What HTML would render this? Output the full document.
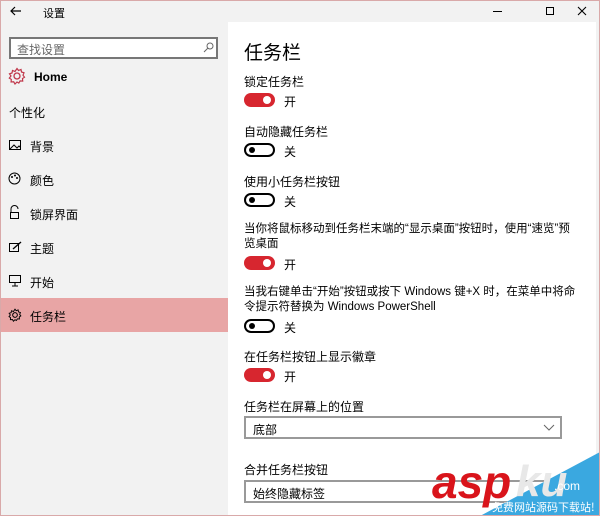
<!DOCTYPE html>
<html><head><meta charset="utf-8"><style>
*{margin:0;padding:0;box-sizing:border-box}
body{width:600px;height:516px;overflow:hidden;background:#f2f2f2;font-family:"Liberation Sans","Noto Sans CJK SC",sans-serif;font-size:12px;color:#000;position:relative}
.frame{position:absolute;inset:0;border:1px solid #d9a9a9;pointer-events:none;z-index:9}
.t{position:absolute;white-space:nowrap}
.main{position:absolute;left:228px;top:22px;width:368px;height:494px;background:#fff}
.tog{position:absolute;width:31px;height:14px;border-radius:7px}
.on{background:#d7262f}
.on::after{content:"";position:absolute;right:4px;top:3px;width:8px;height:8px;border-radius:50%;background:#fff}
.off{border:2px solid #000;background:#fff}
.off::after{content:"";position:absolute;left:3px;top:2px;width:6px;height:6px;border-radius:50%;background:#000}
.sel{position:absolute;left:244px;width:318px;height:23px;border:2px solid #999;background:#fff}
svg.i{position:absolute}
</style></head><body>
<div class="frame"></div>
<svg class="i" style="left:10px;top:5px" width="12" height="12"><path d="M11 6H1M5 2L1 6l4 4" stroke="#000" fill="none" stroke-width="1.2"/></svg>
<div class="t" style="left:43px;top:5px;font-size:11px">设置</div>
<div style="position:absolute;left:493px;top:11px;width:9px;height:1px;background:#000"></div>
<div style="position:absolute;left:546px;top:7px;width:8px;height:8px;border:1px solid #000"></div>
<svg class="i" style="left:577px;top:6px" width="10" height="10"><path d="M1 1l8 8M9 1L1 9" stroke="#000" stroke-width="1.1"/></svg>

<div style="position:absolute;left:9px;top:37px;width:209px;height:22px;border:2px solid #777;background:#fff"></div>
<div class="t" style="left:17px;top:41px;color:#666">查找设置</div>
<svg class="i" style="left:203px;top:42px" width="11" height="11"><circle cx="7" cy="4" r="3" stroke="#666" fill="none"/><path d="M5 6L1 10" stroke="#666"/></svg>
<svg class="i" style="left:8px;top:67px" width="18" height="18" viewBox="0 0 18 18"><circle cx="9" cy="9" r="3" stroke="#c0374a" fill="none" stroke-width="1.3"/><path d="M9 1.5l1.5 2 2.5-1 .5 2.5 2.5.8-1 2.4 1.5 2-2 1.3.2 2.6-2.6-.2-1.3 2.2L9 15l-2 2-1.3-2.2-2.6.2.2-2.6-2-1.3L3 9 1.5 6.8l2.5-.8.5-2.5 2.5 1z" stroke="#c0374a" fill="none" stroke-width="1.2"/></svg>
<div class="t" style="left:34px;top:70px;font-weight:bold;font-size:12px">Home</div>
<div class="t" style="left:9px;top:104px">个性化</div>
<svg class="i" style="left:9px;top:140px" width="12" height="11"><rect x=".5" y=".5" width="11" height="9" stroke="#000" fill="none"/><path d="M1 9l4-4 3 3 2-2 2 2" stroke="#000" fill="none"/></svg>
<div class="t" style="left:30px;top:138px">背景</div>
<svg class="i" style="left:8px;top:172px" width="13" height="13"><circle cx="6.5" cy="6.5" r="5.5" stroke="#000" fill="none"/><circle cx="4" cy="5" r="1" fill="#000"/><circle cx="7" cy="3.5" r="1" fill="#000"/><circle cx="9" cy="6" r="1" fill="#000"/></svg>
<div class="t" style="left:30px;top:172px">颜色</div>
<svg class="i" style="left:9px;top:205px" width="11" height="14"><path d="M2 7V4a3.5 3.5 0 0 1 7 0" stroke="#000" fill="none"/><rect x="1.5" y="7.5" width="8" height="6" stroke="#000" fill="none"/></svg>
<div class="t" style="left:30px;top:206px">锁屏界面</div>
<svg class="i" style="left:9px;top:241px" width="13" height="12"><rect x=".5" y="2.5" width="9" height="8" stroke="#000" fill="none"/><path d="M4 8l8-7" stroke="#000" stroke-width="1.3"/></svg>
<div class="t" style="left:30px;top:240px">主题</div>
<svg class="i" style="left:9px;top:275px" width="12" height="12"><rect x=".5" y=".5" width="11" height="7" stroke="#000" fill="none"/><path d="M6 8v3M3 11h6" stroke="#000"/></svg>
<div class="t" style="left:30px;top:274px">开始</div>
<div style="position:absolute;left:1px;top:298px;width:227px;height:34px;background:#e8a5a5"></div>
<svg class="i" style="left:8px;top:308px" width="14" height="14" viewBox="0 0 18 18"><circle cx="9" cy="9" r="3" stroke="#000" fill="none" stroke-width="1.3"/><path d="M9 1.5l1.5 2 2.5-1 .5 2.5 2.5.8-1 2.4 1.5 2-2 1.3.2 2.6-2.6-.2-1.3 2.2L9 15l-2 2-1.3-2.2-2.6.2.2-2.6-2-1.3L3 9 1.5 6.8l2.5-.8.5-2.5 2.5 1z" stroke="#000" fill="none" stroke-width="1.2"/></svg>
<div class="t" style="left:30px;top:308px">任务栏</div>

<div class="main"></div>
<div class="t" style="left:244px;top:38px;font-size:19px">任务栏</div>
<div class="t" style="left:244px;top:73px">锁定任务栏</div>
<div class="tog on" style="left:244px;top:93px"></div><div class="t" style="left:284px;top:93px">开</div>
<div class="t" style="left:244px;top:123px">自动隐藏任务栏</div>
<div class="tog off" style="left:244px;top:143px"></div><div class="t" style="left:284px;top:143px">关</div>
<div class="t" style="left:244px;top:173px">使用小任务栏按钮</div>
<div class="tog off" style="left:244px;top:193px"></div><div class="t" style="left:284px;top:193px">关</div>
<div class="t" style="left:244px;top:222px;line-height:15px;font-size:11.5px">当你将鼠标移动到任务栏末端的“显示桌面”按钮时，使用“速览”预<br>览桌面</div>
<div class="tog on" style="left:244px;top:256px"></div><div class="t" style="left:284px;top:256px">开</div>
<div class="t" style="left:244px;top:285px;line-height:15px;font-size:11.5px">当我右键单击“开始”按钮或按下 Windows 键+X 时，在菜单中将命<br>令提示符替换为 Windows PowerShell</div>
<div class="tog off" style="left:244px;top:319px"></div><div class="t" style="left:284px;top:319px">关</div>
<div class="t" style="left:244px;top:348px">在任务栏按钮上显示徽章</div>
<div class="tog on" style="left:244px;top:368px"></div><div class="t" style="left:284px;top:368px">开</div>
<div class="t" style="left:244px;top:398px">任务栏在屏幕上的位置</div>
<div class="sel" style="top:416px"></div>
<div class="t" style="left:253px;top:421px">底部</div>
<svg class="i" style="left:543px;top:424px" width="12" height="7"><path d="M1 1l5 5 5-5" stroke="#666" fill="none"/></svg>
<div class="t" style="left:244px;top:461px">合并任务栏按钮</div>
<div class="sel" style="top:480px"></div>
<div class="t" style="left:253px;top:485px">始终隐藏标签</div>

<svg style="position:absolute;left:420px;top:440px" width="180" height="76">
<polygon points="60,76 180,12 180,76" fill="#3aa8e0"/>
<text x="96" y="56" font-family="Liberation Sans" font-weight="bold" font-style="italic" font-size="44" fill="#e8e8e8">ku</text>
<text x="12" y="58" font-family="Liberation Sans" font-weight="bold" font-style="italic" font-size="46" fill="#d9141b">asp</text>
<text x="134" y="50" font-family="Liberation Sans" font-size="12" fill="#fff">.com</text>
<text x="72" y="71" font-family="Noto Sans CJK SC" font-size="11" fill="#fff">免费网站源码下载站!</text>
</svg>
</body></html>
